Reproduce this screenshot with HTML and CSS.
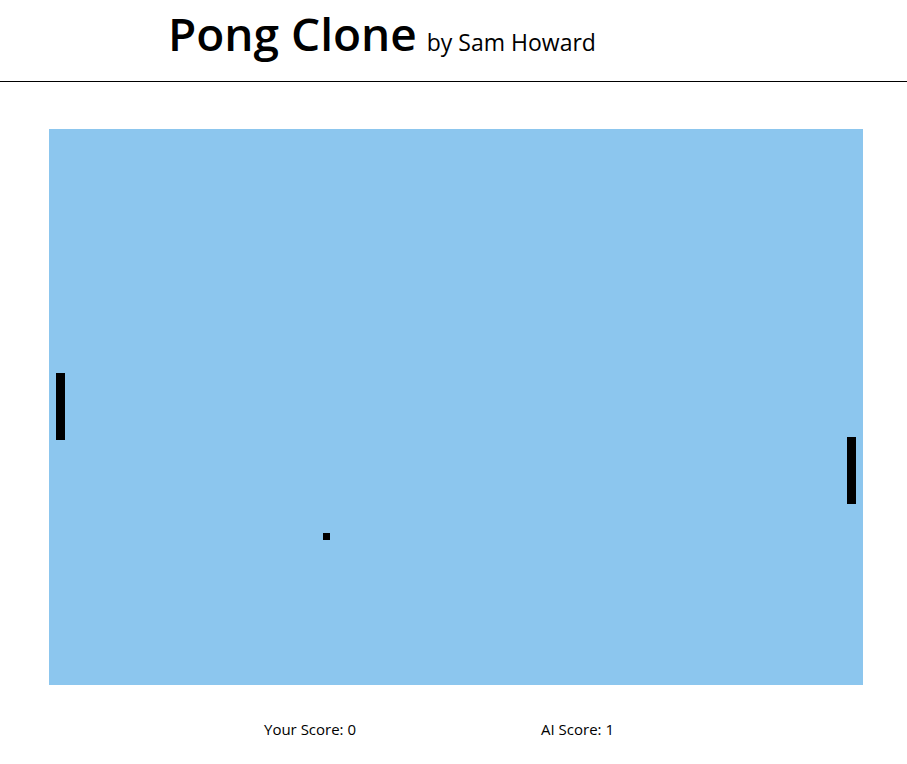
FILE: index.html
```html
<!DOCTYPE html>
<html>
<head>
<meta charset="utf-8">
<title>Pong Clone</title>
<link rel="stylesheet" href="styles.css">
</head>
<body>
<header class="header">
  <h1 class="title">Pong Clone<span class="byline"> by Sam Howard</span></h1>
</header>
<main class="main">
  <div class="court">
    <div class="paddle paddle-left"></div>
    <div class="paddle paddle-right"></div>
    <div class="ball"></div>
  </div>
  <div class="scores">
    <div class="score score-player">Your Score: 0</div>
    <div class="score score-ai">AI Score: 1</div>
  </div>
</main>
</body>
</html>
```

FILE: styles.css
```css
html, body {
  margin: 0;
  padding: 0;
  background: #ffffff;
  font-family: "Open Sans", "Noto Sans", sans-serif;
  color: #000;
}

.header {
  height: 81px;
  border-bottom: 1px solid #000;
  box-sizing: content-box;
}

.title {
  margin: 0;
  padding: 2px 0 0 168px;
  font-size: 46px;
  font-weight: 600;
  line-height: 62px;
  white-space: nowrap;
}

.byline {
  margin-left: 4px;
  font-size: 23px;
  font-weight: 400;
}

.main {
  padding: 47px 0 0 49px;
}

.court {
  position: relative;
  width: 814px;
  height: 556px;
  background: #8cc6ee;
}

.paddle {
  position: absolute;
  width: 9px;
  height: 67px;
  background: #000;
}

.paddle-left {
  left: 7px;
  top: 244px;
}

.paddle-right {
  left: 798px;
  top: 308px;
}

.ball {
  position: absolute;
  left: 274px;
  top: 404px;
  width: 7px;
  height: 7px;
  background: #000;
}

.scores {
  display: flex;
  padding: 33px 0 0 215px;
  font-size: 15px;
  line-height: 22px;
}

.score-player {
  width: 277px;
}
```
